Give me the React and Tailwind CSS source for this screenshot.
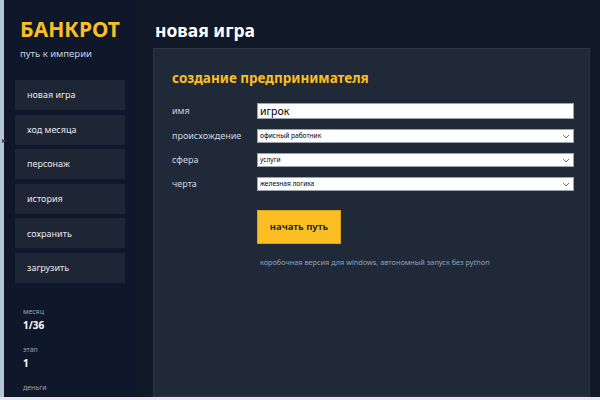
import React from 'react';

const navItems = ['новая игра', 'ход месяца', 'персонаж', 'история', 'сохранить', 'загрузить'];

const stats = [
  { label: 'месяц', value: '1/36' },
  { label: 'этап', value: '1' },
  { label: 'деньги', value: '' },
];

const fields = [
  { label: 'происхождение', value: 'офисный работник' },
  { label: 'сфера', value: 'услуги' },
  { label: 'черта', value: 'железная логика' },
];

function Chevron() {
  return (
    <svg width="8" height="5" viewBox="0 0 8 5" fill="none" stroke="#6b7280" strokeWidth="1">
      <path d="M1 1l3 3 3-3" />
    </svg>
  );
}

function Select({ value }) {
  return (
    <div className="flex h-[14px] items-center justify-between border border-[#9ca3af] bg-white pl-[2px] pr-[3px]">
      <span className="text-[6.6px] leading-none text-black">{value}</span>
      <Chevron />
    </div>
  );
}

export default function App() {
  return (
    <div
      className="flex h-[400px] w-[600px] flex-col overflow-hidden bg-[#111827]"
      style={{ fontFamily: '"Noto Sans", "Open Sans", sans-serif' }}
    >
      <div className="flex min-h-0 flex-1">
        {/* window edge */}
        <div className="relative w-[4px] shrink-0 bg-[#b4c6d6]">
          <span className="absolute left-[2px] top-[136px] text-[8px] leading-none text-[#374151]">▸</span>
        </div>

        {/* sidebar */}
        <aside className="flex w-[136px] shrink-0 flex-col bg-[#0f172a] pl-[11px] pr-[15px]">
          <h1 className="mt-[15px] pl-[5px] text-[21px] font-bold leading-[28px] text-[#fbbf24]">БАНКРОТ</h1>
          <p className="mt-[4px] pl-[5px] text-[9.5px] leading-[14px] text-[#cbd5e1]">путь к империи</p>

          <nav className="mt-[19px] flex flex-col gap-[4.6px]">
            {navItems.map((item) => (
              <div key={item} className="flex h-[30px] items-center bg-[#1e2636] pl-[12px] text-[9px] text-[#e5e7eb]">
                {item}
              </div>
            ))}
          </nav>

          <div className="mt-[24px] flex flex-col gap-[13px] pl-[8px]">
            {stats.map((s) => (
              <div key={s.label} className="flex flex-col gap-[1px]">
                <span className="text-[7px] leading-[10px] text-[#9ca3af]">{s.label}</span>
                {s.value && <span className="text-[10px] font-bold leading-[14px] text-white">{s.value}</span>}
              </div>
            ))}
          </div>
        </aside>

        {/* main */}
        <main className="flex min-w-0 flex-1 flex-col pl-[13px] pr-[10px]">
          <h2 className="mt-[18px] pl-[2px] text-[17.5px] font-bold leading-[24px] text-white">новая игра</h2>

          <section className="mt-[6px] flex-1 border border-[#2b3546] bg-[#1f2937] pl-[18px] pr-[15px] pt-[19px]">
            <h3 className="text-[13.5px] font-bold leading-[20px] text-[#fbbf24]">создание предпринимателя</h3>

            <div className="mt-[15px] grid grid-cols-[85px_1fr] items-center gap-y-[10px]">
              <span className="text-[9px] text-[#cbd5e1]">имя</span>
              <div className="flex h-[16px] items-center border border-[#9ca3af] bg-white pl-[2px]">
                <span className="text-[10.5px] leading-none text-black">игрок</span>
              </div>
              {fields.map((f) => (
                <React.Fragment key={f.label}>
                  <span className="text-[9px] text-[#cbd5e1]">{f.label}</span>
                  <Select value={f.value} />
                </React.Fragment>
              ))}
            </div>

            <div className="ml-[85px] mt-[19px]">
              <button className="h-[34px] w-[84px] border border-[#d9a21b] bg-[#fbbf24] text-[9.5px] font-bold text-[#1f2937]">
                начать путь
              </button>
              <p className="mt-[13px] pl-[3px] text-[7.3px] text-[#94a3b8]">
                коробочная версия для windows, автономный запуск без python
              </p>
            </div>
          </section>
        </main>
      </div>
      <div className="h-[3px] shrink-0 bg-[#e5e7eb]" />
    </div>
  );
}
